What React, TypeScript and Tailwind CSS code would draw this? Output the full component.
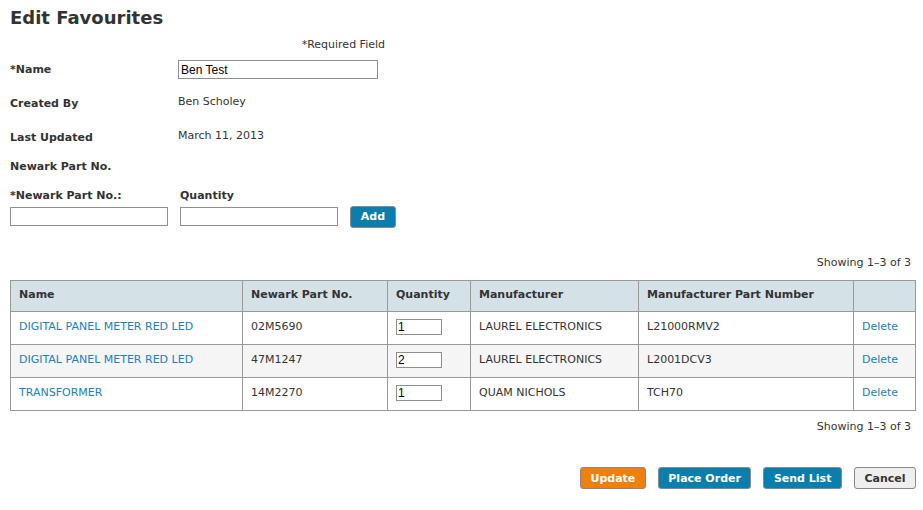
import * as React from "react";

type Favourite = {
  name: string;
  part: string;
  qty: string;
  manufacturer: string;
  mfrPart: string;
};

const rows: Favourite[] = [
  {
    name: "DIGITAL PANEL METER RED LED",
    part: "02M5690",
    qty: "1",
    manufacturer: "LAUREL ELECTRONICS",
    mfrPart: "L21000RMV2",
  },
  {
    name: "DIGITAL PANEL METER RED LED",
    part: "47M1247",
    qty: "2",
    manufacturer: "LAUREL ELECTRONICS",
    mfrPart: "L2001DCV3",
  },
  {
    name: "TRANSFORMER",
    part: "14M2270",
    qty: "1",
    manufacturer: "QUAM NICHOLS",
    mfrPart: "TCH70",
  },
];

const inputCls =
  "h-[19px] border border-[#8f8f8f] bg-white px-[2px] font-['Liberation_Sans',Arial,sans-serif] text-[12px] text-black outline-none";

function InfoRow({ label, children }: { label: string; children?: React.ReactNode }) {
  return (
    <div className="flex h-[34px] items-center">
      <div className="w-[168px] font-bold">{label}</div>
      <div className="-mt-[4px]">{children}</div>
    </div>
  );
}

function ActionButton({
  children,
  tone,
}: {
  children: React.ReactNode;
  tone: "orange" | "blue" | "grey";
}) {
  const toneCls =
    tone === "orange"
      ? "bg-[#f0800e] text-white"
      : tone === "blue"
        ? "bg-[#0a7fae] text-white"
        : "bg-[#eeeeee] text-[#333]";
  return (
    <button
      className={`h-[22px] rounded-[3px] border border-[#8a8a8a] px-[9.5px] text-[11px] font-bold leading-none ${toneCls}`}
    >
      {children}
    </button>
  );
}

export default function App() {
  return (
    <div className="min-h-[510px] w-[923px] bg-white px-[10px] pt-[6px] font-['DejaVu_Sans',Verdana,sans-serif] text-[11px] text-[#333]">
      <h1 className="text-[18px] font-bold leading-[24px] text-[#333]">Edit Favourites</h1>

      <div className="mt-[7px] flex w-[375px] justify-end text-[11px]">*Required Field</div>

      <div>
        <div className="flex h-[34px] items-center">
          <div className="w-[168px] font-bold">*Name</div>
          <input className={`${inputCls} -mt-[2px] w-[200px]`} defaultValue="Ben Test" />
        </div>
        <InfoRow label="Created By">Ben Scholey</InfoRow>
        <InfoRow label="Last Updated">March 11, 2013</InfoRow>
        <div className="flex h-[24px] items-center font-bold">Newark Part No.</div>
      </div>

      <div className="mt-[8px] flex items-end gap-[12px]">
        <div className="flex flex-col gap-[3px]">
          <span className="font-bold">*Newark Part No.:</span>
          <input className={`${inputCls} w-[158px]`} />
        </div>
        <div className="flex flex-col gap-[3px]">
          <span className="font-bold">Quantity</span>
          <input className={`${inputCls} w-[158px]`} />
        </div>
        <button className="mb-[-2px] h-[22px] w-[46px] rounded-[3px] border border-[#8a8a8a] bg-[#0a7fae] text-[11px] font-bold text-white">
          Add
        </button>
      </div>

      <div className="mt-[29px] flex justify-end pr-[2px]">Showing 1–3 of 3</div>

      <table className="mt-[8px] w-[906px] table-fixed border-collapse border border-[#999]">
        <colgroup>
          <col className="w-[232px]" />
          <col className="w-[145px]" />
          <col className="w-[83px]" />
          <col className="w-[168px]" />
          <col className="w-[215px]" />
          <col />
        </colgroup>
        <thead>
          <tr className="h-[31px] bg-[#d4e1e6] text-left font-bold">
            <th className="border-r border-[#999] px-[8px]">Name</th>
            <th className="border-r border-[#999] px-[8px]">Newark Part No.</th>
            <th className="border-r border-[#999] px-[8px]">Quantity</th>
            <th className="border-r border-[#999] px-[8px]">Manufacturer</th>
            <th className="border-r border-[#999] px-[8px]">Manufacturer Part Number</th>
            <th className="px-[8px]"></th>
          </tr>
        </thead>
        <tbody>
          {rows.map((row, i) => (
            <tr
              key={row.part}
              className={`h-[33px] border-t border-[#999] ${i === 1 ? "bg-[#f5f5f5]" : "bg-white"}`}
            >
              <td className="border-r border-[#999] px-[8px] text-[#1b80bb]">{row.name}</td>
              <td className="border-r border-[#999] px-[8px]">{row.part}</td>
              <td className="border-r border-[#999] px-[8px]">
                <input
                  className="h-[16px] w-[46px] border border-[#8f8f8f] bg-white px-[1px] font-['Liberation_Sans',Arial,sans-serif] text-[12px] leading-none text-black outline-none"
                  defaultValue={row.qty}
                />
              </td>
              <td className="border-r border-[#999] px-[8px]">{row.manufacturer}</td>
              <td className="border-r border-[#999] px-[8px]">{row.mfrPart}</td>
              <td className="px-[8px] text-[#1b80bb]">Delete</td>
            </tr>
          ))}
        </tbody>
      </table>

      <div className="mt-[8px] flex justify-end pr-[2px]">Showing 1–3 of 3</div>

      <div className="-mr-[3px] mt-[32px] flex justify-end gap-[12px]">
        <ActionButton tone="orange">Update</ActionButton>
        <ActionButton tone="blue">Place Order</ActionButton>
        <ActionButton tone="blue">Send List</ActionButton>
        <ActionButton tone="grey">Cancel</ActionButton>
      </div>
    </div>
  );
}
